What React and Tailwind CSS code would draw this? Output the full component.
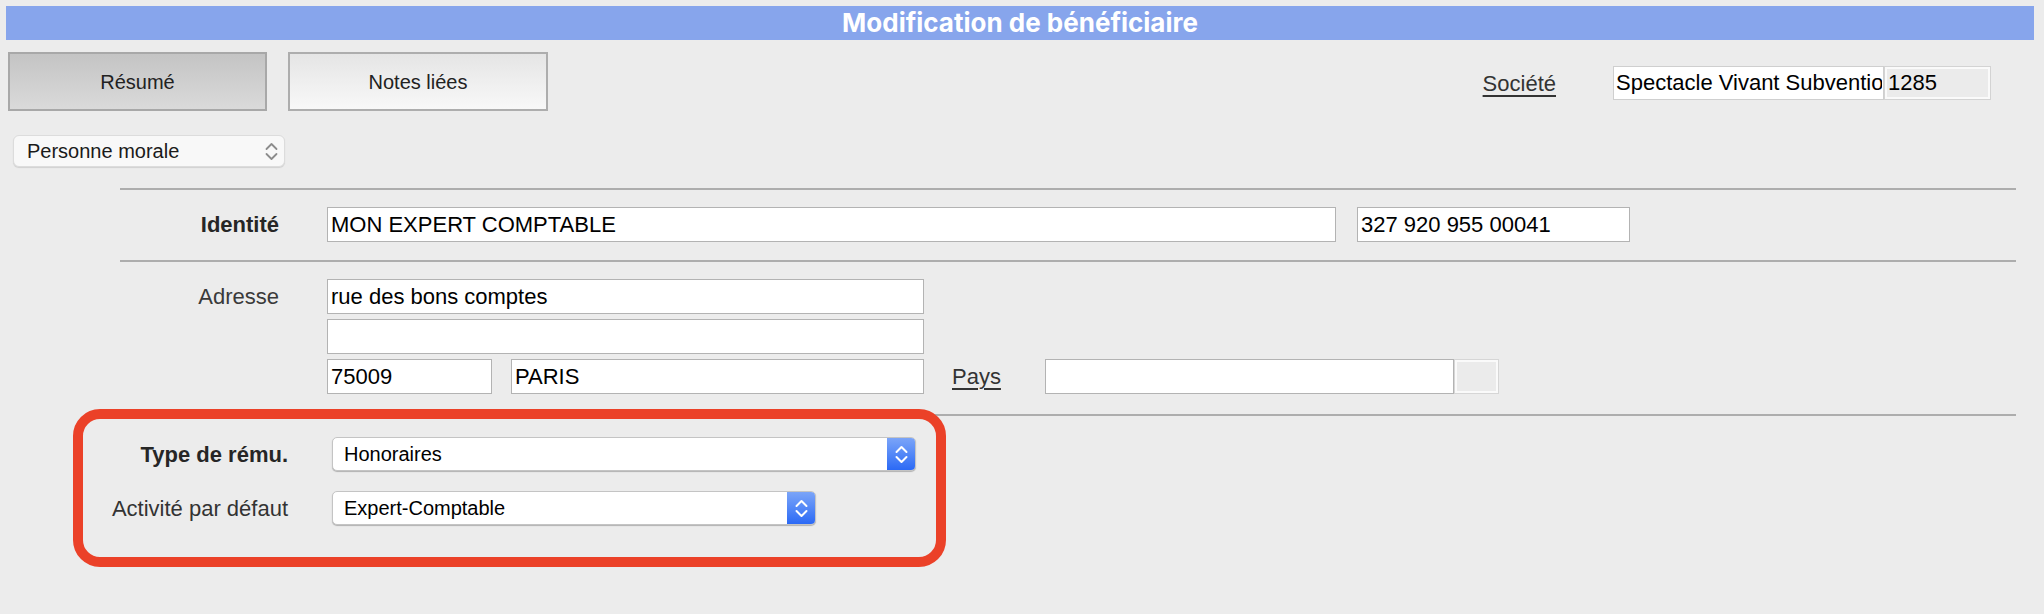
import React from "react";

const font = { fontFamily: '"Liberation Sans", Arial, sans-serif' };

function Chevrons({ color = "#fff", w = 13, h = 19, sw = 2 }) {
  return (
    <svg width={w} height={h} viewBox="0 0 13 19" fill="none">
      <polyline points="1.5,7 6.5,2 11.5,7" stroke={color} strokeWidth={sw} strokeLinecap="round" strokeLinejoin="round" />
      <polyline points="1.5,12 6.5,17 11.5,12" stroke={color} strokeWidth={sw} strokeLinecap="round" strokeLinejoin="round" />
    </svg>
  );
}

function Field({ className = "", children }) {
  return (
    <div className={"h-[35px] bg-white border border-[#b3b3b3] pl-[3px] flex items-center text-[22px] leading-none text-black whitespace-nowrap overflow-hidden " + className}>
      {children}
    </div>
  );
}

function BlueSelect({ width, value }) {
  return (
    <div className={"h-[34px] flex rounded-[5px] bg-white border border-[#c4c4c4] shadow-[0_1px_1px_rgba(0,0,0,0.25)] overflow-hidden " + width}>
      <div className="flex-1 pl-[11px] flex items-center text-[20px] leading-none text-black">{value}</div>
      <div className="w-[28px] flex items-center justify-center bg-gradient-to-b from-[#7ba4f8] to-[#2b69f5]">
        <Chevrons />
      </div>
    </div>
  );
}

export default function App() {
  return (
    <div className="w-[2044px] h-[614px] bg-[#ececec] pt-[6px] pl-[6px] pr-[10px] overflow-hidden" style={font}>
      <div className="h-[34px] bg-[#87a5ec] flex items-center justify-center text-white font-bold text-[26px] leading-none" style={{ fontFamily: 'Inter, "Liberation Sans", sans-serif' }}>
        Modification de bénéficiaire
      </div>

      <div className="mt-[12px] flex items-start">
        <div className="ml-[2px] flex gap-[21px]">
          <div className="w-[259px] h-[59px] border-2 border-[#a8a8a8] bg-gradient-to-b from-[#c4c4c4] to-[#dadada] flex items-center justify-center text-[20px] text-[#222]">
            Résumé
          </div>
          <div className="w-[260px] h-[59px] border-2 border-[#adadad] bg-gradient-to-b from-[#e5e5e5] to-[#f8f8f8] flex items-center justify-center text-[20px] text-[#222]">
            Notes liées
          </div>
        </div>
        <div className="ml-auto mr-[43px] mt-[14px] flex items-center">
          <span className="text-[22px] text-[#333] underline decoration-[2px] underline-offset-[4px]">Société</span>
          <div className="ml-[57px] w-[271px] h-[34px] bg-white border border-[#cfcfcf] pl-[2px] flex items-center text-[22px] leading-none text-black">
            <span className="block w-[266px] overflow-hidden whitespace-nowrap">Spectacle Vivant Subvention</span>
          </div>
          <div className="w-[107px] h-[34px] bg-[#ebebeb] border border-[#d3d3d3] shadow-[inset_0_0_0_2px_#fafafa] pl-[3px] flex items-center text-[22px] leading-none text-black">
            1285
          </div>
        </div>
      </div>

      <div className="mt-[24px] ml-[7px] w-[272px] h-[32px] rounded-[6px] bg-[#f8f8f8] border border-[#dcdcdc] shadow-[0_1px_1px_rgba(0,0,0,0.12)] flex items-center justify-between pl-[13px] pr-[6px]">
        <span className="text-[20px] leading-none text-[#1a1a1a]">Personne morale</span>
        <Chevrons color="#8c8c8c" sw={1.8} />
      </div>

      <div className="mt-[21px] ml-[114px] mr-[18px] h-[2px] bg-[#adadad]" />

      <div className="mt-[17px] ml-[114px] flex items-center">
        <div className="w-[159px] text-right text-[22px] font-bold text-[#262626]">Identité</div>
        <Field className="ml-[48px] w-[1009px]">MON EXPERT COMPTABLE</Field>
        <Field className="ml-[21px] w-[273px]">327 920 955 00041</Field>
      </div>

      <div className="mt-[18px] ml-[114px] mr-[18px] h-[2px] bg-[#adadad]" />

      <div className="mt-[17px] ml-[114px] flex items-start">
        <div className="w-[159px] h-[35px] flex items-center justify-end text-[22px] text-[#3a3a3a]">Adresse</div>
        <div className="ml-[48px] flex flex-col gap-[5px]">
          <Field className="w-[597px]">rue des bons comptes</Field>
          <Field className="w-[597px]"></Field>
          <div className="flex items-center">
            <Field className="w-[165px]">75009</Field>
            <Field className="ml-[19px] w-[413px]">PARIS</Field>
            <span className="ml-[28px] text-[22px] text-[#333] underline decoration-[2px] underline-offset-[4px]">Pays</span>
            <Field className="ml-[44px] w-[409px]"></Field>
            <div className="w-[45px] h-[35px] bg-[#ebebeb] border border-[#d6d6d6] shadow-[inset_0_0_0_2px_#fafafa]" />
          </div>
        </div>
      </div>

      <div className="mt-[20px] ml-[114px] mr-[18px] h-[2px] bg-[#adadad]" />

      <div className="-mt-[7px] ml-[67px] w-[873px] border-[10px] border-[#eb4128] rounded-[27px] pt-[18px] pb-[32px] flex flex-col gap-[20px]">
        <div className="flex items-center">
          <div className="w-[205px] text-right text-[22px] font-bold text-[#262626]">Type de rému.</div>
          <div className="ml-[44px]">
            <BlueSelect width="w-[584px]" value="Honoraires" />
          </div>
        </div>
        <div className="flex items-center">
          <div className="w-[205px] text-right text-[22px] text-[#333]">Activité par défaut</div>
          <div className="ml-[44px]">
            <BlueSelect width="w-[484px]" value="Expert-Comptable" />
          </div>
        </div>
      </div>
    </div>
  );
}
